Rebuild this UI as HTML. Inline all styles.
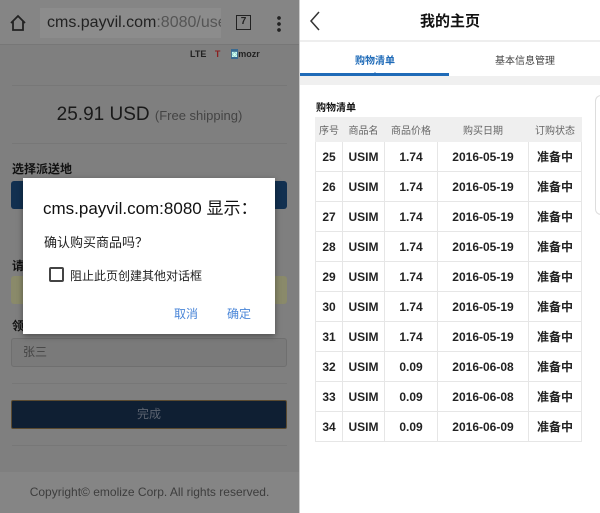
<!DOCTYPE html>
<html><head><meta charset="utf-8"><style>
*{margin:0;padding:0;box-sizing:border-box}
body{width:600px;height:513px;overflow:hidden;position:relative;background:#fff;font-family:"Liberation Sans","Noto Sans CJK SC",sans-serif}
.a{position:absolute}
.L{left:0;top:0;width:299px;height:513px;background:#7f7f7f;overflow:hidden}
table{border-collapse:collapse;font-size:12px;color:#222}
td,th{border:1px solid #e6e6e6;text-align:center;height:30px;font-weight:bold}
th{height:24px;background:#efefef;color:#666;font-weight:normal;font-size:10px;border-color:#efefef}
</style></head><body>
<div class="a L">
 <div class="a" style="left:0;top:0;width:299px;height:45px;background:#858585;border-bottom:1px solid #777"></div>
 <svg class="a" style="left:9px;top:14px" width="18" height="18" viewBox="0 0 18 18"><path d="M2 9 L9 2 L16 9 M4 7 V16 H14 V7" fill="none" stroke="#222" stroke-width="1.8"/></svg>
 <div class="a" style="left:40px;top:8px;width:181px;height:30px;background:#8c8c8c;font-size:16px;line-height:30px;padding-left:7px;color:#222;white-space:nowrap;overflow:hidden">cms.payvil.com<span style="color:#555">:8080/user</span></div>
 <div class="a" style="left:236px;top:15px;width:15px;height:15px;border:1.5px solid #222;font-size:10px;text-align:center;line-height:12px;font-weight:bold;color:#222">7</div>
 <div class="a" style="left:277px;top:15px;width:4px;height:17px;background:radial-gradient(circle,#222 1.7px,transparent 2px) 0 0/4px 6px"></div>
 <div class="a" style="left:190px;top:49px;font-size:9px;color:#222;font-weight:bold">LTE <span style="color:#8a1f1f;margin-left:6px">T</span> <span style="margin-left:8px;background:#3a6a90;color:#cfe;padding:0 1px">◙</span>mozr</div>
 <div class="a" style="left:12px;top:85px;width:275px;height:1px;background:#777"></div>
 <div class="a" style="left:0;top:104px;width:299px;text-align:center;font-size:19px;color:#1a1a1a">25.91 USD <span style="font-size:13px;color:#444">(Free shipping)</span></div>
 <div class="a" style="left:12px;top:143px;width:275px;height:1px;background:#777"></div>
 <div class="a" style="left:12px;top:160px;font-size:12px;font-weight:bold;color:#111">选择派送地</div>
 <div class="a" style="left:11px;top:181px;width:276px;height:28px;background:#123050;border-radius:3px"></div>
 <div class="a" style="left:12px;top:257px;font-size:12px;font-weight:bold;color:#111">请</div>
 <div class="a" style="left:11px;top:276px;width:276px;height:28px;background:#8a8a6a;border-radius:3px"></div>
 <div class="a" style="left:12px;top:317px;font-size:12px;font-weight:bold;color:#111">领</div>
 <div class="a" style="left:11px;top:338px;width:276px;height:29px;background:#7a7a7a;border:1px solid #6f6f6f;border-radius:3px;font-size:12px;color:#444;line-height:27px;padding-left:11px">张三</div>
 <div class="a" style="left:12px;top:383px;width:275px;height:1px;background:#777"></div>
 <div class="a" style="left:11px;top:400px;width:276px;height:29px;background:#0f1f33;border:1px solid #5a4a30;border-radius:2px;text-align:center;line-height:27px;font-size:12px;color:#556"></div>
 <div class="a" style="left:11px;top:400px;width:276px;height:29px;text-align:center;line-height:28px;font-size:12px;color:#5c6370">完成</div>
 <div class="a" style="left:12px;top:445px;width:275px;height:1px;background:#777"></div>
 <div class="a" style="left:0;top:472px;width:299px;height:41px;background:#858585;text-align:center;line-height:40px;font-size:12px;color:#3d3d3d">Copyright© emolize Corp. All rights reserved.</div>
 <div class="a" style="left:23px;top:178px;width:252px;height:156px;background:#fff;box-shadow:0 2px 6px rgba(0,0,0,.4)">
  <div class="a" style="left:20px;top:16px;font-size:17px;color:#111;white-space:nowrap">cms.payvil.com:8080 显示：</div>
  <div class="a" style="left:21px;top:54px;font-size:13px;color:#222">确认购买商品吗？</div>
  <div class="a" style="left:26px;top:89px;width:15px;height:15px;border:2px solid #444;border-radius:2px"></div>
  <div class="a" style="left:47px;top:89px;font-size:12px;color:#222">阻止此页创建其他对话框</div>
  <div class="a" style="left:151px;top:127px;font-size:12px;color:#4a86d8">取消</div>
  <div class="a" style="left:204px;top:127px;font-size:12px;color:#4a86d8">确定</div>
 </div>
</div>
<div class="a" style="left:299px;top:0;width:1px;height:513px;background:#ccc"></div>
<svg class="a" style="left:309px;top:11px" width="12" height="20" viewBox="0 0 12 20"><path d="M10 1 L2 10 L10 19" fill="none" stroke="#333" stroke-width="1.5"/></svg>
<div class="a" style="left:300px;top:10px;width:300px;text-align:center;font-size:15px;font-weight:bold;color:#111">我的主页</div>
<div class="a" style="left:300px;top:40px;width:300px;height:2px;background:#eee"></div>
<div class="a" style="left:300px;top:52px;width:150px;text-align:center;font-size:10px;font-weight:bold;color:#1f6bb8">购物清单</div>
<div class="a" style="left:450px;top:52px;width:150px;text-align:center;font-size:10px;color:#444">基本信息管理</div>
<div class="a" style="left:300px;top:73px;width:149px;height:3px;background:#1f6bb8"></div>
<div class="a" style="left:371px;top:68px;width:0;height:0;border:4px solid transparent;border-bottom:5px solid #1f6bb8"></div>
<div class="a" style="left:300px;top:76px;width:300px;height:9px;background:#f0f0f0"></div>
<div class="a" style="left:595px;top:95px;width:6px;height:120px;border:1px solid #ddd;border-right:none;border-radius:6px 0 0 6px"></div>
<div class="a" style="left:316px;top:99px;font-size:10px;font-weight:bold;color:#111">购物清单</div>
<table class="a" style="left:315px;top:117px;width:267px">
<tr><th style="width:27px">序号</th><th style="width:42px">商品名</th><th style="width:53px">商品价格</th><th style="width:91px">购买日期</th><th>订购状态</th></tr>
<tr><td>25</td><td>USIM</td><td>1.74</td><td>2016-05-19</td><td>准备中</td></tr>
<tr><td>26</td><td>USIM</td><td>1.74</td><td>2016-05-19</td><td>准备中</td></tr>
<tr><td>27</td><td>USIM</td><td>1.74</td><td>2016-05-19</td><td>准备中</td></tr>
<tr><td>28</td><td>USIM</td><td>1.74</td><td>2016-05-19</td><td>准备中</td></tr>
<tr><td>29</td><td>USIM</td><td>1.74</td><td>2016-05-19</td><td>准备中</td></tr>
<tr><td>30</td><td>USIM</td><td>1.74</td><td>2016-05-19</td><td>准备中</td></tr>
<tr><td>31</td><td>USIM</td><td>1.74</td><td>2016-05-19</td><td>准备中</td></tr>
<tr><td>32</td><td>USIM</td><td>0.09</td><td>2016-06-08</td><td>准备中</td></tr>
<tr><td>33</td><td>USIM</td><td>0.09</td><td>2016-06-08</td><td>准备中</td></tr>
<tr><td>34</td><td>USIM</td><td>0.09</td><td>2016-06-09</td><td>准备中</td></tr>
</table>
</body></html>
